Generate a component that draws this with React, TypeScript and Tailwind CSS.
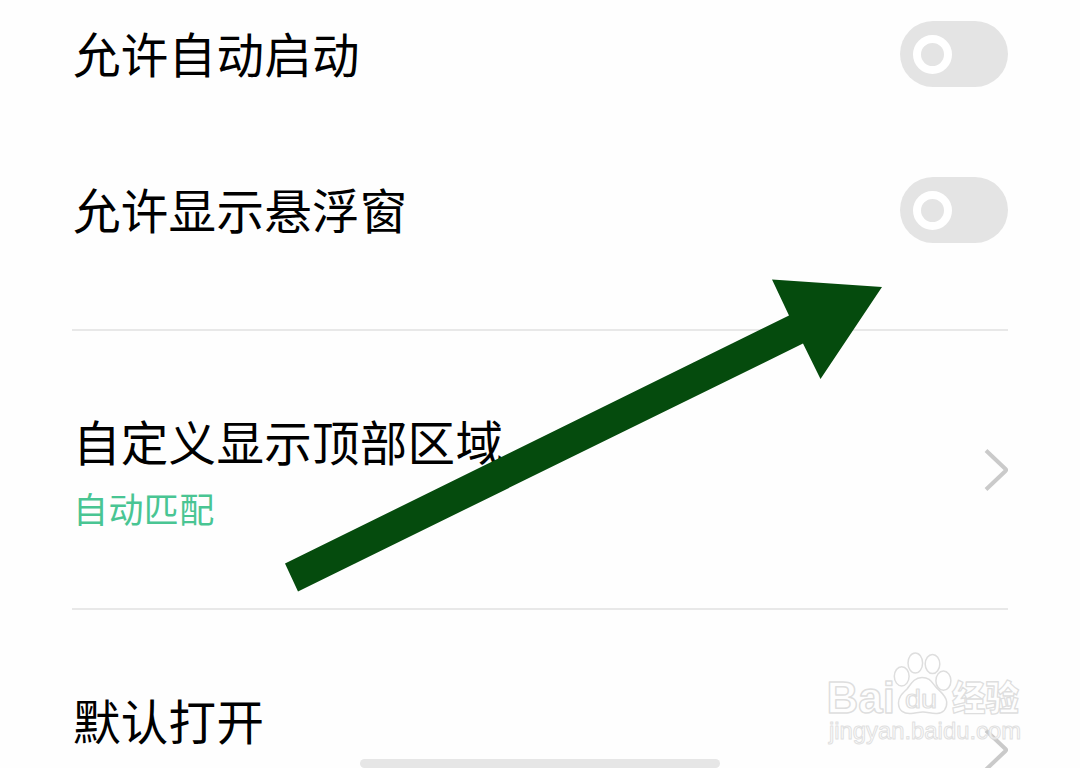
import type { ReactNode } from 'react';

function Label({ children }: { children: ReactNode }) {
  return <span className="block whitespace-nowrap pl-px text-[47.5px] leading-[60px] tracking-[0.3px] text-black">{children}</span>;
}

function Toggle() {
  return (
    <span role="switch" aria-checked="false" className="flex h-[66px] w-[108px] items-center rounded-full bg-[#e4e4e4] pl-[13px]">
      <span className="h-[39px] w-[39px] rounded-full border-8 border-white" />
    </span>
  );
}

function Chevron() {
  return (
    <svg width="26" height="42" viewBox="0 0 26 42" fill="none" stroke="#cacaca" strokeWidth="4">
      <path d="M4 1.5 23.5 20 Q24.5 21 23.5 22 L4 40.5" />
    </svg>
  );
}

function Watermark() {
  return (
    <svg
      className="absolute left-[820px] top-[645px]"
      width="210"
      height="105"
      viewBox="820 645 210 105"
      fill="#ffffff"
      fillOpacity="0.8"
      stroke="#dedede"
      strokeWidth="1.5"
      strokeLinejoin="round"
    >
      <text x="826.5" y="713" fontFamily="Liberation Sans, sans-serif" fontWeight="700" fontSize="45" textLength="68.5" lengthAdjust="spacingAndGlyphs">Bai</text>
      <ellipse cx="901.7" cy="676.3" rx="7.4" ry="9.6" />
      <ellipse cx="915.3" cy="663" rx="7.3" ry="10" />
      <ellipse cx="932.5" cy="664" rx="7.3" ry="9.6" />
      <ellipse cx="943.4" cy="680.7" rx="7.5" ry="9.6" />
      <path d="M922 677.5C914 677.5 911 684 907 689C902 694 898.5 697 898.5 703C898.5 711 904 714 911 713.5C916 713 919 712 923 712C928 712 932 714 937 713.5C943 713 947 709 946.7 702C946.3 695 939 691 935 686C931 681 929 677.5 922 677.5Z" />
      <text x="905" y="707.5" fontFamily="Liberation Sans, sans-serif" fontSize="26" strokeWidth="1.2" textLength="32" lengthAdjust="spacingAndGlyphs">du</text>
      <text x="952" y="710.5" fontFamily="Noto Sans CJK SC, sans-serif" fontWeight="900" fontSize="35" strokeWidth="1.3" textLength="67" lengthAdjust="spacingAndGlyphs">经验</text>
      <text x="829" y="739" fontFamily="Liberation Sans, sans-serif" fontSize="24.5" strokeWidth="1" stroke="#e0e0e0" textLength="192" lengthAdjust="spacingAndGlyphs">jingyan.baidu.com</text>
    </svg>
  );
}

function Arrow() {
  return (
    <svg className="absolute inset-0" width="1080" height="768" viewBox="0 0 1080 768">
      <path fill="#054b0d" d="M285 563.5 789 315.5 772 279.5 882 287 820.5 379 803 343.5 298 591.5Z" />
    </svg>
  );
}

export default function App() {
  return (
    <main lang="zh-CN" className="relative flex h-[768px] w-[1080px] flex-col overflow-hidden bg-[#fefefe] px-[72px] font-['Noto_Sans_CJK_SC',sans-serif]">
      <section className="flex h-[331px] shrink-0 flex-col border-b-2 border-[#e8e8e8] pt-[21px]">
        <div className="flex h-[66px] items-center justify-between">
          <div className="pb-[2px]">
            <Label>允许自动启动</Label>
          </div>
          <Toggle />
        </div>
        <div className="mt-[90px] flex h-[66px] items-center justify-between">
          <div className="pb-[2px]">
            <Label>允许显示悬浮窗</Label>
          </div>
          <Toggle />
        </div>
      </section>
      <section className="flex h-[279px] shrink-0 items-center justify-between border-b-2 border-[#e8e8e8]">
        <div className="pt-px">
          <Label>自定义显示顶部区域</Label>
          <span className="mt-[15px] block pl-px text-[35px] leading-[44px] tracking-[0.4px] text-[#49c593]">自动匹配</span>
        </div>
        <Chevron />
      </section>
      <section className="flex h-[279px] shrink-0 items-center justify-between">
        <div className="pb-[59px]">
          <Label>默认打开</Label>
        </div>
        <Chevron />
      </section>
      <Arrow />
      <Watermark />
      <div className="absolute left-[360px] top-[759px] h-[9px] w-[360px] rounded-full bg-[#e6e6e6]" />
    </main>
  );
}
